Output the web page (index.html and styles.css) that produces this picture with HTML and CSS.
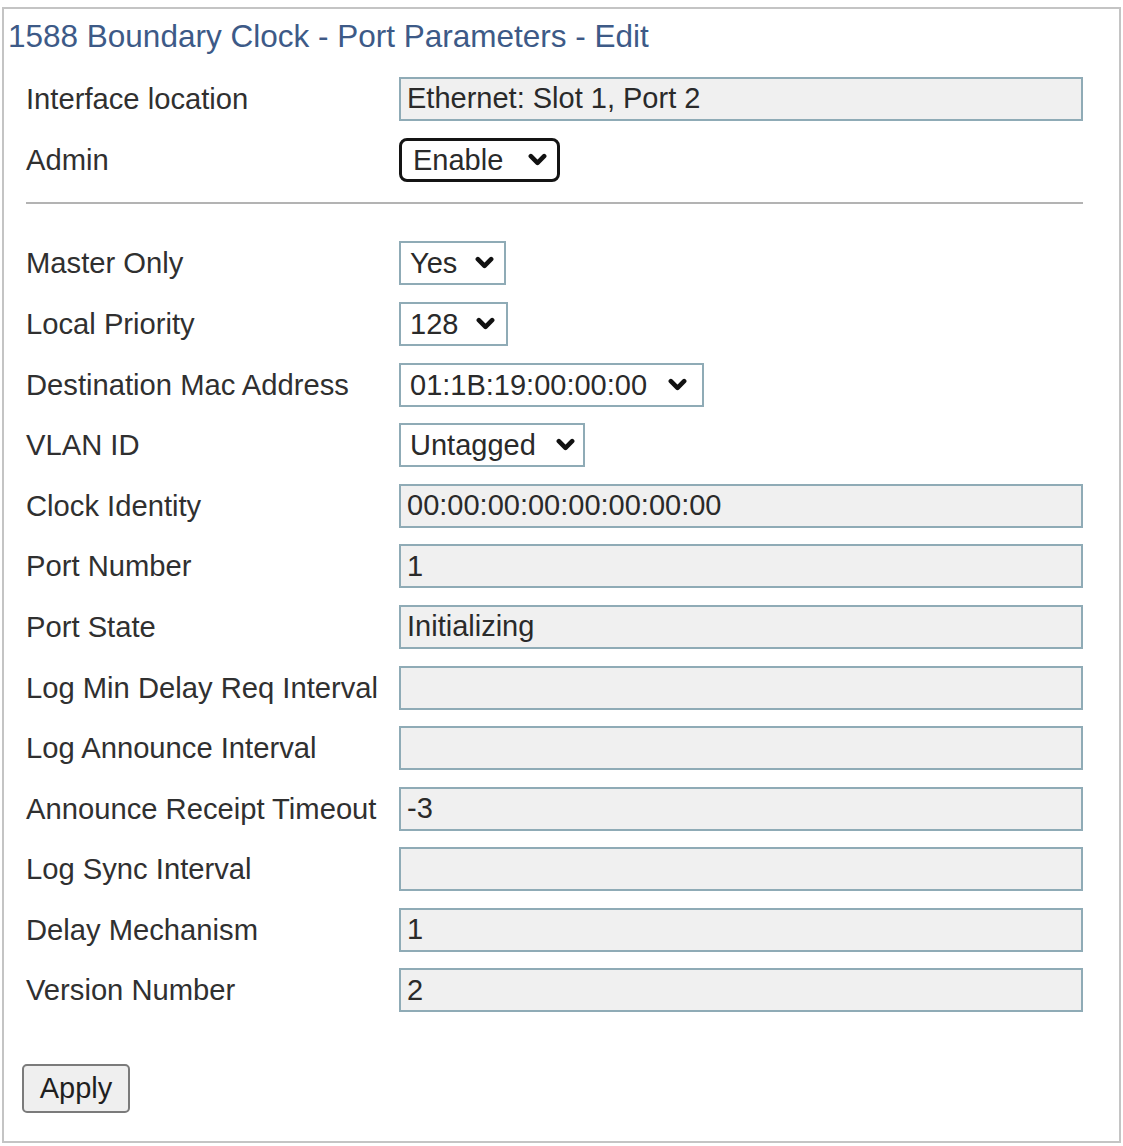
FILE: index.html
```html
<!DOCTYPE html>
<html lang="en">
<head>
<meta charset="utf-8">
<title>1588 Boundary Clock - Port Parameters - Edit</title>
<link rel="stylesheet" href="styles.css">
</head>
<body>
<div class="panel">
  <h1 class="title">1588 Boundary Clock - Port Parameters - Edit</h1>
  <form class="form">
    <div class="grid">
      <label class="lbl">Interface location</label>
      <div class="ctl"><input class="txt" type="text" value="Ethernet: Slot 1, Port 2" readonly></div>
      <label class="lbl">Admin</label>
      <div class="ctl"><span class="selwrap">
        <select class="sel sel-admin"><option>Enable</option><option>Disable</option></select>
        <svg class="chev chev-admin" viewBox="0 0 20 13"><path d="M3 3 L10 10 L17 3" fill="none" stroke="#111" stroke-width="4.8" stroke-linecap="round" stroke-linejoin="round"/></svg>
      </span></div>
    </div>
    <hr class="sep">
    <div class="grid">
      <label class="lbl">Master Only</label>
      <div class="ctl"><span class="selwrap">
        <select class="sel sel-yes"><option>Yes</option><option>No</option></select>
        <svg class="chev chev-yes" viewBox="0 0 20 13"><path d="M3 3 L10 10 L17 3" fill="none" stroke="#111" stroke-width="4.8" stroke-linecap="round" stroke-linejoin="round"/></svg>
      </span></div>
      <label class="lbl">Local Priority</label>
      <div class="ctl"><span class="selwrap">
        <select class="sel sel-prio"><option>128</option></select>
        <svg class="chev chev-prio" viewBox="0 0 20 13"><path d="M3 3 L10 10 L17 3" fill="none" stroke="#111" stroke-width="4.8" stroke-linecap="round" stroke-linejoin="round"/></svg>
      </span></div>
      <label class="lbl">Destination Mac Address</label>
      <div class="ctl"><span class="selwrap">
        <select class="sel sel-mac"><option>01:1B:19:00:00:00</option></select>
        <svg class="chev chev-mac" viewBox="0 0 20 13"><path d="M3 3 L10 10 L17 3" fill="none" stroke="#111" stroke-width="4.8" stroke-linecap="round" stroke-linejoin="round"/></svg>
      </span></div>
      <label class="lbl">VLAN ID</label>
      <div class="ctl"><span class="selwrap">
        <select class="sel sel-vlan"><option>Untagged</option></select>
        <svg class="chev chev-vlan" viewBox="0 0 20 13"><path d="M3 3 L10 10 L17 3" fill="none" stroke="#111" stroke-width="4.8" stroke-linecap="round" stroke-linejoin="round"/></svg>
      </span></div>
      <label class="lbl">Clock Identity</label>
      <div class="ctl"><input class="txt" type="text" value="00:00:00:00:00:00:00:00" readonly></div>
      <label class="lbl">Port Number</label>
      <div class="ctl"><input class="txt" type="text" value="1" readonly></div>
      <label class="lbl">Port State</label>
      <div class="ctl"><input class="txt" type="text" value="Initializing" readonly></div>
      <label class="lbl">Log Min Delay Req Interval</label>
      <div class="ctl"><input class="txt" type="text" value="" readonly></div>
      <label class="lbl">Log Announce Interval</label>
      <div class="ctl"><input class="txt" type="text" value="" readonly></div>
      <label class="lbl">Announce Receipt Timeout</label>
      <div class="ctl"><input class="txt" type="text" value="-3" readonly></div>
      <label class="lbl">Log Sync Interval</label>
      <div class="ctl"><input class="txt" type="text" value="" readonly></div>
      <label class="lbl">Delay Mechanism</label>
      <div class="ctl"><input class="txt" type="text" value="1" readonly></div>
      <label class="lbl">Version Number</label>
      <div class="ctl"><input class="txt" type="text" value="2" readonly></div>
    </div>
    <div class="actions">
      <button type="button" class="btn">Apply</button>
    </div>
  </form>
</div>
</body>
</html>
```
FILE: styles.css
```css
html, body {
  margin: 0;
  padding: 0;
  background: #ffffff;
}

body {
  padding: 7px 2px 0 2px;
  font-family: "Liberation Sans", Arial, sans-serif;
  color: #2e2e2e;
}

.panel {
  box-sizing: border-box;
  width: 1119px;
  height: 1136px;
  border: 2px solid #c4c4c4;
  padding: 7px 0 0 0;
}

.title {
  margin: 0;
  padding-left: 4px;
  font-weight: normal;
  font-size: 31.5px;
  line-height: 40px;
  height: 40px;
  color: #3d5a87;
}

.form {
  margin: 12.7px 0 0 0;
  padding-left: 22px;
}

.grid {
  display: grid;
  grid-template-columns: 373px 684px;
  grid-auto-rows: 60.6px;
  align-items: center;
}

.lbl {
  font-size: 29.2px;
  line-height: 34px;
  color: #303030;
  white-space: nowrap;
}

.ctl {
  display: flex;
  align-items: center;
  height: 100%;
}

.txt {
  box-sizing: border-box;
  width: 684px;
  height: 44px;
  margin: 0;
  padding: 0 6px;
  border: 2px solid #8fabb6;
  background: #f0f0f0;
  font-family: "Liberation Sans", Arial, sans-serif;
  font-size: 29px;
  color: #2a2a2a;
  outline: none;
}

.sep {
  box-sizing: border-box;
  width: 1057px;
  margin: 12px 0 29.2px 0;
  height: 2px;
  border: 0;
  background: #b3b3b3;
}

.selwrap {
  position: relative;
  display: inline-block;
  height: 44px;
}

.sel {
  -webkit-appearance: none;
  appearance: none;
  box-sizing: border-box;
  height: 44px;
  margin: 0;
  padding: 0 0 0 9px;
  border: 2px solid #8fabb6;
  border-radius: 0;
  background: #ffffff;
  font-family: "Liberation Sans", Arial, sans-serif;
  font-size: 29px;
  color: #2a2a2a;
  outline: none;
}

.sel-admin {
  width: 161px;
  padding-left: 11px;
  border: 3px solid #141414;
  border-radius: 8px;
}

.sel-yes { width: 107px; }
.sel-prio { width: 109px; }
.sel-mac { width: 305px; }
.sel-vlan { width: 186px; }

.chev {
  position: absolute;
  top: 15px;
  width: 19px;
  height: 13px;
  pointer-events: none;
}

.chev-yes { right: 12px; }
.chev-prio { right: 13px; }
.chev-mac { right: 17px; }
.chev-vlan { right: 10px; }
.chev-admin { right: 13px; }

.actions {
  margin-top: 43px;
}

.btn {
  box-sizing: border-box;
  margin-left: -4px;
  width: 108px;
  height: 49px;
  padding: 0;
  border: 2px solid #7b7b7b;
  border-radius: 5px;
  background: #efefef;
  font-family: "Liberation Sans", Arial, sans-serif;
  font-size: 29px;
  color: #1f1f1f;
}
```
